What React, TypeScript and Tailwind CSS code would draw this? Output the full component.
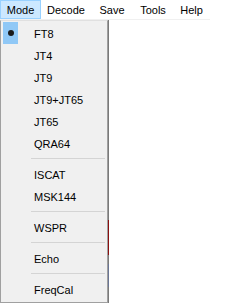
import React from "react";

const font = { fontFamily: '"Liberation Sans", Arial, sans-serif' };

type Item = { label: string; checked?: boolean } | { sep: true };

const items: Item[] = [
  { label: "FT8", checked: true },
  { label: "JT4" },
  { label: "JT9" },
  { label: "JT9+JT65" },
  { label: "JT65" },
  { label: "QRA64" },
  { sep: true },
  { label: "ISCAT" },
  { label: "MSK144" },
  { sep: true },
  { label: "WSPR" },
  { sep: true },
  { label: "Echo" },
  { sep: true },
  { label: "FreqCal" },
];

const bar = [
  { label: "Mode", w: "w-[41px]", active: true },
  { label: "Decode", w: "w-[50px]" },
  { label: "Save", w: "w-[42px]" },
  { label: "Tools", w: "w-[40px]" },
  { label: "Help", w: "w-[37px]" },
];

export default function App() {
  return (
    <div
      className="w-[246px] h-[303px] bg-white overflow-hidden text-[11px] text-black flex flex-col"
      style={font}
    >
      <div className="flex h-[20px] w-[210px] border-b border-[#f0f0f0]">
        {bar.map((b) => (
          <div
            key={b.label}
            className={`${b.w} h-[19px] flex items-center justify-center ${
              b.active ? "bg-[#cce8ff] border border-[#99d1ff]" : ""
            }`}
          >
            <span className="leading-none pt-[1px]">{b.label}</span>
          </div>
        ))}
      </div>
      <div className="flex flex-1">
        <div className="w-[108px] h-[283px] bg-[#f0f0f0] border-l border-t border-b border-r border-l-[#a0a0a0] border-t-[#e0e0e0] border-b-[#a0a0a0] border-r-[#a0a0a0] pt-[1px] flex flex-col">
          {items.map((it, i) =>
            "sep" in it ? (
              <div key={i} className="h-[9px] flex flex-col">
                <div className="mt-[4px] h-px ml-[30px] mr-[2px] bg-[#d4d4d4]" />
              </div>
            ) : (
              <div key={i} className="h-[22px] flex items-center">
                <div
                  className={`ml-[2px] w-[15px] h-[22px] flex items-center justify-center ${
                    it.checked ? "bg-[#90c8f6]" : ""
                  }`}
                >
                  {it.checked && (
                    <div className="w-[6px] h-[6px] rounded-full bg-[#1a1a1a]" />
                  )}
                </div>
                <span className="ml-[16px] leading-none pt-[3px]">{it.label}</span>
              </div>
            )
          )}
        </div>
        <div className="w-px h-[283px] flex flex-col bg-[#7a7a7a]">
          <div className="h-[200px]" />
          <div className="h-[35px] bg-[#8b1010]" />
          <div className="h-[9px]" />
          <div className="h-[23px] bg-[#6a7594]" />
        </div>
        <div className="flex-1" />
      </div>
    </div>
  );
}
